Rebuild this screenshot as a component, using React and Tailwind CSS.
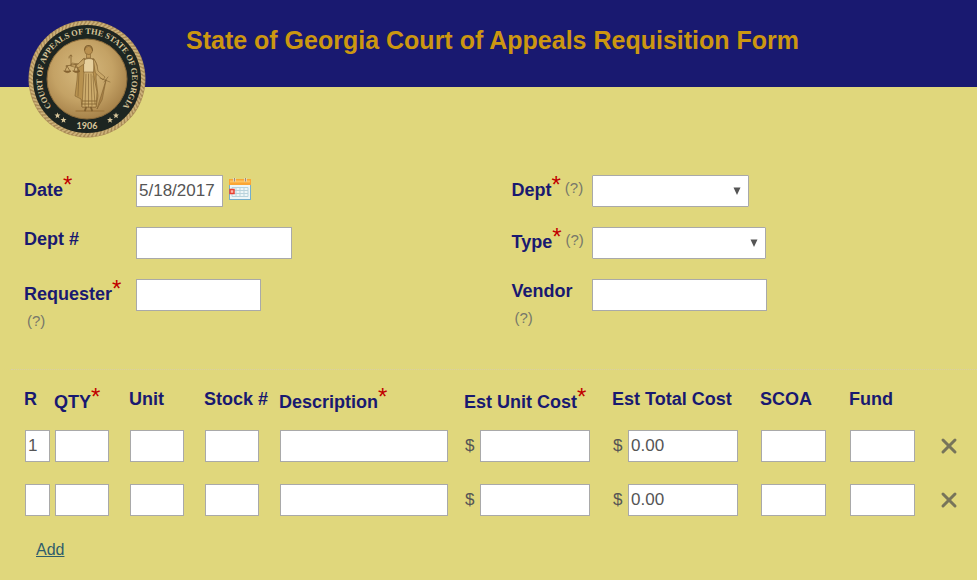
import { useState } from 'react'
import { X } from 'lucide-react'

const inputClass = 'h-8 border border-[#a9a9a9] bg-white px-[2px] text-[17px] text-[#555555] outline-none focus:border-[#191970]'

function Required() {
  return <span className="align-[3px] text-[24px] leading-5 font-normal text-[#c00000]" aria-hidden="true">*</span>
}

function Help({ label, stacked }) {
  return (
    <button
      type="button"
      aria-label={`Help for ${label}`}
      className={`px-1 text-[15px] leading-5 text-[#77776a] ${stacked ? 'mt-1 block' : 'align-[3px]'}`}
    >
      (?)
    </button>
  )
}

function Seal() {
  const ropeMarks = Array.from({ length: 90 }, (_, i) => i * 4)
  return (
    <svg className="h-[118px] w-[118px] shrink-0" viewBox="0 0 118 118" role="img" aria-label="Court of Appeals seal">
      <defs>
        <radialGradient id="coin" cx="45%" cy="40%" r="62%">
          <stop offset="0%" stopColor="#d6b97e" />
          <stop offset="60%" stopColor="#c4a265" />
          <stop offset="100%" stopColor="#a58048" />
        </radialGradient>
        <path id="mottoArc" d="M 26.6 90.3 A 45 45 0 1 1 91.4 90.3" />
        <path id="star" d="M0 -3 L0.8 -0.9 L3 -0.9 L1.3 0.5 L1.9 2.7 L0 1.4 L-1.9 2.7 L-1.3 0.5 L-3 -0.9 L-0.8 -0.9 Z" />
      </defs>

      {/* rope edge */}
      <circle cx="59" cy="59" r="58.5" fill="#a88a56" />
      {ropeMarks.map((a) => (
        <path key={a} d="M57.5 5 L60.5 1.2" stroke="#cdb27a" strokeWidth="1.8" transform={`rotate(${a} 59 59)`} />
      ))}
      <circle cx="59" cy="59" r="54" fill="#1d2521" />
      <circle cx="59" cy="59" r="40" fill="url(#coin)" stroke="#8b6b3b" strokeWidth="1" />

      <text fill="#d9c69a" fontFamily="Liberation Serif, serif" fontWeight="bold" fontSize="8.4" textAnchor="middle">
        <textPath href="#mottoArc" startOffset="50%">COURT OF APPEALS OF THE STATE OF GEORGIA</textPath>
      </text>
      <text x="59" y="109" textAnchor="middle" fill="#d9c69a" fontFamily="Lato, sans-serif" fontWeight="bold" fontSize="9">1906</text>
      <g fill="#d9c69a">
        <use href="#star" x="29.5" y="95.5" />
        <use href="#star" x="35.5" y="100" />
        <use href="#star" x="82" y="100" />
        <use href="#star" x="88" y="95.5" />
      </g>

      {/* Lady Justice */}
      <g stroke="#80602f" strokeWidth="0.6" strokeLinejoin="round" strokeLinecap="round">
        <path d="M48 91 H76" stroke="#a07a40" strokeWidth="1.4" />
        {/* cloak and gown */}
        <path d="M55 39 L50 45 L49 60 L47 76 L53 79 L54 87 H68 L70 76 L68 58 L69 45 L66 39 Z" fill="#b8924f" />
        <path d="M56 52 L54 87 H68 L69 72 L65 52 Z" fill="#cdac6c" />
        <path d="M58 54 L57 86 M60.5 54 V87 M63 54 L64 86 M65 56 L67 84 M51 50 L50 76" fill="none" />
        <path d="M54.5 81 H68.5 M54 84 H68" fill="none" strokeWidth="0.8" />
        <path d="M56 40 Q61 37 66 40 L65.5 52 H56 Z" fill="#e6cf9c" />
        {/* arms */}
        <path d="M56 38.5 L50 44 L44 43 L42.5 46 L50 48 L56 44 Z" fill="#c9a768" />
        <path d="M65.5 39 Q69 42 70 51 L77 57 L75 60 L67.5 53 Z" fill="#c9a768" />
        {/* head */}
        <path d="M58.5 34 V38 H62.5 V34 Z" fill="#c09a59" />
        <circle cx="60.5" cy="30.5" r="4" fill="#b9904f" />
        <path d="M56.5 30 Q57 25.5 60.5 25.5 Q64 25.5 64.5 30" fill="none" strokeWidth="1.1" />
        {/* scales */}
        <path d="M43 45 V35 M41 38 Q41 34 44 36 M38 46 L50 44 M39 46 L37 51 M39 46 L42 51 M48 45 L46 51 M48 45 L51 51" fill="none" strokeWidth="0.8" />
        <path d="M36 51 H43 Q39.5 54.5 36 51 M45 51 H52 Q48.5 54.5 45 51" fill="#8b6632" />
        {/* sword and feet */}
        <path d="M72 58 L82 62 M78 60 L69 89 L74 80 Z M76 62 L80 57" fill="#a98247" />
        <path d="M58 87.5 L57 90.5 M63 87.5 L64 90.5" fill="none" strokeWidth="1.8" />
      </g>
    </svg>
  )
}

function CalendarIcon() {
  return (
    <svg className="h-6 w-6" viewBox="0 0 24 24" aria-hidden="true">
      <rect x="1.5" y="4" width="21" height="18.5" fill="#eef6f7" stroke="#74aecd" />
      <rect x="1" y="2" width="22" height="6" fill="#fba635" />
      <path d="M2 4.5 H22" stroke="#ffc35f" strokeWidth="2" />
      <path d="M4 10.5 H20 V19.5 H4 Z M4 13.5 H20 M4 16.5 H20 M8 10 V19 M12 10 V19 M16 10 V19" fill="none" stroke="#b9d3dc" />
      <rect x="2" y="12.5" width="4" height="4" fill="#fbb9aa" stroke="#e84032" strokeWidth="1.5" />
      <path d="M6.5 1 V4.5 M17.5 1 V4.5" stroke="#e7dfca" strokeWidth="2.5" />
      <path d="M6.5 1 V4.5 M17.5 1 V4.5" stroke="#a38c70" />
    </svg>
  )
}

function Field({ id, label, required, help, stacked, labelWidth, children }) {
  return (
    <div className="flex min-h-[52px] items-start">
      <div className={`${labelWidth} shrink-0 whitespace-nowrap`}>
        <label htmlFor={id} className="inline-block pl-[1px] text-[18px] leading-6 font-bold text-[#191970]">
          {label}{required && <Required />}
        </label>
        {help && <Help label={label} stacked={stacked} />}
      </div>
      {children}
    </div>
  )
}

function Select({ id, className }) {
  return (
    <div className={`relative ${className}`}>
      <select id={id} className={`${inputClass} w-full appearance-none rounded-[1px]`}>
        <option value=""></option>
      </select>
      <svg className="pointer-events-none absolute top-3 right-2 h-2 w-2" viewBox="0 0 8 8" aria-hidden="true">
        <path d="M0.5 0.5 H7.5 L4 8 Z" fill="#555555" />
      </svg>
    </div>
  )
}

const columns = [
  { key: 'r', label: 'R', col: 'w-[30px]', input: 'w-[25px]' },
  { key: 'qty', label: 'QTY', required: true, col: 'w-[75px]', input: 'w-[54px]' },
  { key: 'unit', label: 'Unit', col: 'w-[75px]', input: 'w-[54px]' },
  { key: 'stock', label: 'Stock #', col: 'w-[75px]', input: 'w-[54px]' },
  { key: 'description', label: 'Description', required: true, col: 'w-[185px]', input: 'w-[168px]' },
  { key: 'unitCost', label: 'Est Unit Cost', required: true, money: true, col: 'w-[148px]', input: 'w-[110px]' },
  { key: 'totalCost', label: 'Est Total Cost', money: true, col: 'w-[148px]', input: 'w-[110px]' },
  { key: 'scoa', label: 'SCOA', col: 'w-[89px]', input: 'w-[65px]' },
  { key: 'fund', label: 'Fund', col: 'w-[89px]', input: 'w-[65px]' },
]

export default function App() {
  const [rows, setRows] = useState([
    { id: 1, r: '1', totalCost: '0.00' },
    { id: 2, r: '', totalCost: '0.00' },
  ])

  const addRow = (e) => {
    e.preventDefault()
    setRows([...rows, { id: Date.now(), r: '', totalCost: '0.00' }])
  }

  return (
    <div className="min-h-screen bg-[#e0d77c] font-['Liberation_Sans',Arial,sans-serif] text-[#555555]">
      <header className="flex h-[87px] items-start gap-10 bg-[#191970] pt-5 pl-7">
        <Seal />
        <h1 className="pt-1 text-[25px] leading-8 font-bold text-[#cc9710]">
          State of Georgia Court of Appeals Requisition Form
        </h1>
      </header>

      <form onSubmit={(e) => e.preventDefault()}>
        <div className="grid grid-cols-2 pt-[88px]">
          <div className="pl-[23px]">
            <Field id="date" label="Date" required labelWidth="w-[113px]">
              <input id="date" type="text" defaultValue="5/18/2017" className={`${inputClass} w-[87px]`} />
              <button type="button" aria-label="Pick a date" className="ml-[5px] pt-[2px]">
                <CalendarIcon />
              </button>
            </Field>
            <Field id="deptNo" label="Dept #" labelWidth="w-[113px]">
              <input id="deptNo" type="text" className={`${inputClass} w-[156px]`} />
            </Field>
            <Field id="requester" label="Requester" required help stacked labelWidth="w-[113px]">
              <input id="requester" type="text" className={`${inputClass} w-[125px]`} />
            </Field>
          </div>
          <div className="pl-[22px]">
            <Field id="dept" label="Dept" required help labelWidth="w-[81px]">
              <Select id="dept" className="w-[157px]" />
            </Field>
            <Field id="type" label="Type" required help labelWidth="w-[81px]">
              <Select id="type" className="w-[174px]" />
            </Field>
            <Field id="vendor" label="Vendor" help stacked labelWidth="w-[81px]">
              <input id="vendor" type="text" className={`${inputClass} w-[175px]`} />
            </Field>
          </div>
        </div>

        <hr className="mt-[38px] ml-[11px] border-t border-dotted border-[#d8cfa6]" />

        <table className="mt-[17px] ml-[23px] table-fixed border-collapse text-left">
          <colgroup>
            {columns.map((c) => <col key={c.key} className={c.col} />)}
            <col className="w-[40px]" />
          </colgroup>
          <thead>
            <tr className="h-[43px] align-top">
              {columns.map((c) => (
                <th key={c.key} scope="col" className="p-0 pl-[1px] text-[18px] leading-6 font-bold whitespace-nowrap text-[#191970]">
                  {c.label}{c.required && <Required />}
                </th>
              ))}
              <td></td>
            </tr>
          </thead>
          <tbody>
            {rows.map((row, i) => (
              <tr key={row.id} className="h-[54px] align-top">
                {columns.map((c) => (
                  <td key={c.key} className="p-0 pl-[2px]">
                    <div className="flex items-center">
                      {c.money && <span className="w-[15px] text-[17px]">$</span>}
                      <input
                        type="text"
                        aria-label={`${c.label} row ${i + 1}`}
                        defaultValue={row[c.key] ?? ''}
                        className={`${inputClass} ${c.input}`}
                      />
                    </div>
                  </td>
                ))}
                <td className="p-0">
                  <button
                    type="button"
                    aria-label={`Remove row ${i + 1}`}
                    onClick={() => setRows(rows.filter((r) => r.id !== row.id))}
                    className="flex h-8 items-center"
                  >
                    <X size={24} strokeWidth={3} className="text-[#77745a]" />
                  </button>
                </td>
              </tr>
            ))}
          </tbody>
        </table>

        <a href="#add" onClick={addRow} className="ml-9 inline-block text-[16px] leading-5 text-[#2f5d6b] underline">
          Add
        </a>
      </form>
    </div>
  )
}
